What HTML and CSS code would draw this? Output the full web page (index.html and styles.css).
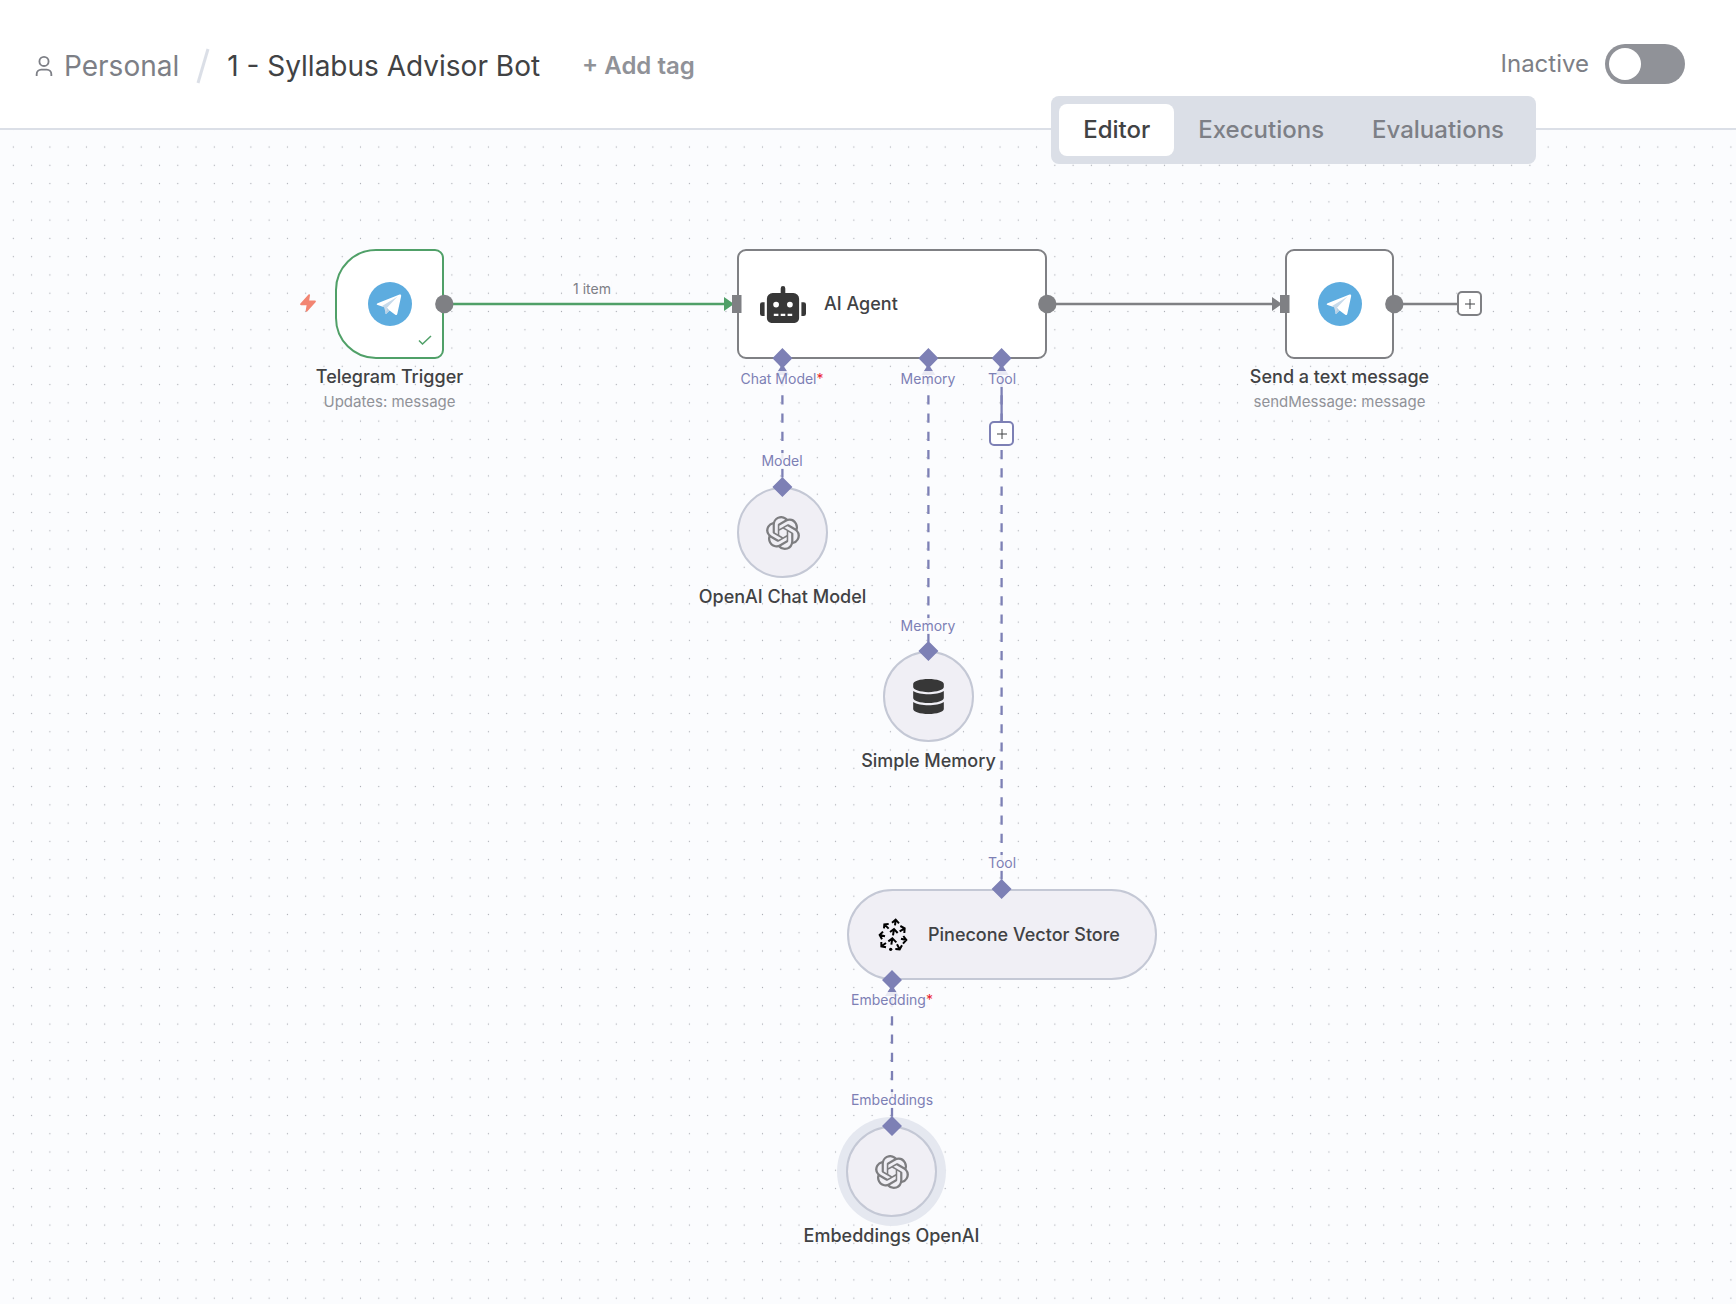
FILE: index.html
```html
<!DOCTYPE html>
<html lang="en">
<head>
<meta charset="utf-8">
<meta name="viewport" content="width=device-width, initial-scale=1">
<title>1 - Syllabus Advisor Bot</title>
<link rel="stylesheet" href="styles.css">
</head>
<body>
<svg class="sprite" aria-hidden="true">
  <symbol id="icon-user" viewBox="0 0 20 24"><circle cx="10" cy="7" r="5"/><path d="M2 23v-2a5 5 0 0 1 5-5h6a5 5 0 0 1 5 5v2"/></symbol>
  <symbol id="icon-bolt" viewBox="0 0 16 18"><path d="M8.500.5C9.200-.2 10.300.2 10 1.300L9.200 6.500h5.600c1 0 1.400 1 .7 1.700L7.200 17.400c-.7.700-1.700.3-1.500-.8l.9-5.400H1.100c-1 0-1.400-1-.7-1.700z"/></symbol>
  <symbol id="icon-telegram" viewBox="0 0 66 66">
    <circle cx="33" cy="33" r="33" fill="#5dacdf"/>
    <path fill="#fff" d="M14.400 31.800 47.300 18.900c1.500-.6 2.900.4 2.400 2.600l-5.700 26c-.4 1.900-1.600 2.300-3.100 1.500l-8.600-6.300-4.200 4c-.5.500-.9.900-1.800.9l.6-8.800L14.500 34.600c-1.900-.6-1.900-1.900-.1-2.800z"/>
    <path fill="#c8daea" d="M20.500 36.500 44 22 28.500 38.500 27 47.500 24 38z"/>
    <path fill="#b5cfe4" d="M26.300 47.600 28.500 38.500 32.300 42.700l-4.200 4c-.5.500-.9.900-1.800.9z"/>
  </symbol>
  <symbol id="icon-robot" viewBox="0 0 640 512"><path d="M32 224h32v192H32a31.962 31.962 0 0 1-32-32V256a31.962 31.962 0 0 1 32-32zm512-48v272a64.063 64.063 0 0 1-64 64H160a64.063 64.063 0 0 1-64-64V176a79.974 79.974 0 0 1 80-80h112V32a32 32 0 0 1 64 0v64h112a79.974 79.974 0 0 1 80 80zm-280 80a40 40 0 1 0-40 40 39.997 39.997 0 0 0 40-40zm-8 128h-64v32h64zm96 0h-64v32h64zm104-128a40 40 0 1 0-40 40 39.997 39.997 0 0 0 40-40zm-8 128h-64v32h64zm192-128v128a31.962 31.962 0 0 1-32 32h-32V224h32a31.962 31.962 0 0 1 32 32z"/></symbol>
  <symbol id="icon-database" viewBox="0 0 448 512"><path d="M448 73.143v45.714C448 159.143 347.667 192 224 192S0 159.143 0 118.857V73.143C0 32.857 100.333 0 224 0s224 32.857 224 73.143zM448 176v102.857C448 319.143 347.667 352 224 352S0 319.143 0 278.857V176c48.125 33.143 136.208 48.572 224 48.572S399.874 209.143 448 176zm0 160v102.857C448 479.143 347.667 512 224 512S0 479.143 0 438.857V336c48.125 33.143 136.208 48.572 224 48.572S399.874 369.143 448 336z"/></symbol>
  <symbol id="icon-openai" viewBox="0 0 24 24"><path d="M22.2819 9.8211a5.9847 5.9847 0 0 0-.5157-4.9108 6.0462 6.0462 0 0 0-6.5098-2.9A6.0651 6.0651 0 0 0 4.9807 4.1818a5.9847 5.9847 0 0 0-3.9977 2.9 6.0462 6.0462 0 0 0 .7427 7.0966 5.98 5.98 0 0 0 .511 4.9107 6.051 6.051 0 0 0 6.5146 2.9001A5.9847 5.9847 0 0 0 13.2599 24a6.0557 6.0557 0 0 0 5.7718-4.2058 5.9894 5.9894 0 0 0 3.9977-2.9001 6.0557 6.0557 0 0 0-.7475-7.0729zm-9.022 12.6081a4.4755 4.4755 0 0 1-2.8764-1.0408l.1419-.0804 4.7783-2.7582a.7948.7948 0 0 0 .3927-.6813v-6.7369l2.02 1.1686a.071.071 0 0 1 .038.052v5.5826a4.504 4.504 0 0 1-4.4945 4.4944zm-9.6607-4.1254a4.4708 4.4708 0 0 1-.5346-3.0137l.142.0852 4.783 2.7582a.7712.7712 0 0 0 .7806 0l5.8428-3.3685v2.3324a.0804.0804 0 0 1-.0332.0615L9.74 19.9502a4.4992 4.4992 0 0 1-6.1408-1.6464zM2.3408 7.8956a4.485 4.485 0 0 1 2.3655-1.9728V11.6a.7664.7664 0 0 0 .3879.6765l5.8144 3.3543-2.0201 1.1685a.0757.0757 0 0 1-.071 0l-4.8303-2.7865A4.504 4.504 0 0 1 2.3408 7.872zm16.5963 3.8558L13.1038 8.364 15.1192 7.2a.0757.0757 0 0 1 .071 0l4.8303 2.7913a4.4944 4.4944 0 0 1-.6765 8.1042v-5.6772a.79.79 0 0 0-.407-.667zm2.0107-3.0231l-.142-.0852-4.7735-2.7818a.7759.7759 0 0 0-.7854 0L9.409 9.2297V6.8974a.0662.0662 0 0 1 .0284-.0615l4.8303-2.7866a4.4992 4.4992 0 0 1 6.6802 4.66zM8.3065 12.863l-2.02-1.1638a.0804.0804 0 0 1-.038-.0567V6.0742a4.4992 4.4992 0 0 1 7.3757-3.4537l-.142.0805L8.704 5.459a.7948.7948 0 0 0-.3927.6813zm1.0976-2.3654l2.602-1.4998 2.6069 1.4998v2.9994l-2.5974 1.4997-2.6067-1.4997Z"/></symbol>
  <symbol id="icon-pinecone" viewBox="22 22 90 102">
    <circle cx="60" cy="116" r="5" fill="#000" stroke="none"/>
    <path d="M73 44 75 27M64 36 75 27 85 38M67 74 70 55M58 64 70 55 81 67M62 102 65 83M53 92 65 83 77 95M54 54 41 41M40 53 41 41 54 40M43 77 27 73M37 63 27 73 34 86M46 97 32 107M32 94 32 107 46 110M87 62 102 53M89 46 102 53 101 67M91 84 107 88M98 76 107 88 97 99M79 101 87 116M74 115 87 116 94 104"/>
  </symbol>
</svg>

<header class="topbar">
  <nav class="crumbs" aria-label="Breadcrumb">
    <a class="project" href="#"><svg class="user-icon"><use href="#icon-user"/></svg>Personal</a>
    <svg class="slash" viewBox="0 0 14 36"><path d="M2 35 12 1"/></svg>
    <h1 class="title">1 - Syllabus Advisor Bot</h1>
  </nav>
  <button class="add-tag" type="button">+ Add tag</button>
  <label class="activator">Inactive<input class="switch" type="checkbox" role="switch"></label>
  <div class="tabs" role="tablist">
    <button class="tab tab-active" type="button" role="tab" aria-selected="true">Editor</button>
    <button class="tab" type="button" role="tab">Executions</button>
    <button class="tab" type="button" role="tab">Evaluations</button>
  </div>
</header>

<main class="canvas">
  <svg class="layer" aria-hidden="true">
    <defs>
      <pattern id="grid" width="16" height="16" patternUnits="userSpaceOnUse" patternTransform="translate(4.200 7.900) scale(1.142)"><circle cx="8" cy="8" r=".55" fill="#a9acb3"/></pattern>
    </defs>
    <rect width="100%" height="100%" fill="url(#grid)"/>
    <g class="edge">
      <path class="edge-success" d="M444 174H726"/>
      <path d="M1047 174H1274M1394 174H1458"/>
      <path class="edge-sub" d="M1001.600 256V292"/>
      <path class="edge-sub dashed" d="M782.400 247V357M928.400 247V521M1001.600 247V759M892 868V996"/>
    </g>
    <path class="arrow-success" d="M724 167 734 174 724 181z"/>
    <path class="arrow" d="M1272 167 1282 174 1272 181z"/>
    <path class="arrow-sub" d="M782.400 234l7 11h-14zM928.400 234l7 11h-14zM1001.600 234l7 11h-14zM892 855l7 11h-14z"/>
  </svg>

  <section class="node trigger">
    <svg class="bolt"><use href="#icon-bolt"/></svg>
    <div class="box box-trigger"><svg class="telegram"><use href="#icon-telegram"/></svg><svg class="check" viewBox="0 0 14 10"><path d="M1 5.500 4.500 9 13 1"/></svg></div>
    <h2 class="name">Telegram Trigger</h2>
    <p class="sub">Updates: message</p>
  </section>

  <section class="node agent">
    <div class="box box-wide"><svg class="robot"><use href="#icon-robot"/></svg><h2 class="name">AI Agent</h2></div>
  </section>

  <section class="node send">
    <div class="box"><svg class="telegram"><use href="#icon-telegram"/></svg></div>
    <h2 class="name">Send a text message</h2>
    <p class="sub">sendMessage: message</p>
  </section>

  <section class="node chat-model">
    <div class="box box-round"><svg class="openai"><use href="#icon-openai"/></svg></div>
    <h2 class="name">OpenAI Chat Model</h2>
  </section>

  <section class="node memory">
    <div class="box box-round"><svg class="database"><use href="#icon-database"/></svg></div>
    <h2 class="name">Simple Memory</h2>
  </section>

  <section class="node pinecone">
    <div class="box box-pill"><svg class="cone"><use href="#icon-pinecone"/></svg><h2 class="name">Pinecone Vector Store</h2></div>
  </section>

  <section class="node embeddings">
    <div class="box box-round box-selected"><svg class="openai"><use href="#icon-openai"/></svg></div>
    <h2 class="name">Embeddings OpenAI</h2>
  </section>

  <svg class="layer" aria-hidden="true">
    <g class="port">
      <circle cx="444.300" cy="174" r="9.200"/><circle cx="1047.300" cy="174" r="9.200"/><circle cx="1394.300" cy="174" r="9.200"/>
      <path d="M732 165h9.500v18h-9.500zM1280 165h9.500v18h-9.500z"/>
    </g>
    <path class="port-sub" d="M782.400 218l10 10.300-10 10.300-10-10.300zM928.400 218l10 10.300-10 10.300-10-10.300zM1001.600 218l10 10.300-10 10.300-10-10.300zM782.400 347l10 10-10 10-10-10zM928.400 511l10 10-10 10-10-10zM1001.600 749l10 10-10 10-10-10zM892 840l10 10-10 10-10-10zM892 986l10 10-10 10-10-10z"/>
  </svg>

  <span class="label items">1 item</span>
  <span class="label port-label in-model">Chat Model<b class="req">*</b></span>
  <span class="label port-label in-memory">Memory</span>
  <span class="label port-label in-tool">Tool</span>
  <span class="label port-label out-model">Model</span>
  <span class="label port-label out-memory">Memory</span>
  <span class="label port-label out-tool">Tool</span>
  <span class="label port-label in-embedding">Embedding<b class="req">*</b></span>
  <span class="label port-label out-embedding">Embeddings</span>

  <button class="plus plus-main" type="button" aria-label="Add next node"><svg viewBox="0 0 12 12"><path d="M6 1v10M1 6h10"/></svg></button>
  <button class="plus plus-sub" type="button" aria-label="Add tool"><svg viewBox="0 0 12 12"><path d="M6 1v10M1 6h10"/></svg></button>
</main>
</body>
</html>
```
FILE: styles.css
```css
* { box-sizing: border-box; }

body {
  margin: 0;
  min-height: 100vh;
  display: flex;
  flex-direction: column;
  font-family: Inter, "Liberation Sans", sans-serif;
  color: #414244;
  background: #fbfcfe;
}

h1, h2, p { margin: 0; }
button { font: inherit; border: 0; padding: 0; background: none; color: inherit; }
svg { display: block; }
.sprite { position: absolute; width: 0; height: 0; }

/* Top bar */
.topbar {
  position: relative;
  z-index: 2;
  display: flex;
  align-items: center;
  height: 130px;
  padding: 0 51px 0 34px;
  background: #fff;
  border-bottom: 2px solid #dbdfe7;
}
.crumbs { display: flex; align-items: center; gap: 17px; padding-top: 4px; }
.project {
  display: flex;
  align-items: center;
  gap: 10px;
  font-size: 28px;
  line-height: 36px;
  color: #7d7f86;
  text-decoration: none;
}
.user-icon { width: 20px; height: 22px; fill: none; stroke: #7d7f86; stroke-width: 2; }
.slash { width: 14px; height: 36px; fill: none; stroke: #dbdfe7; stroke-width: 3; }
.title { font-size: 28px; line-height: 36px; font-weight: 400; }
.add-tag { margin-left: 42px; padding-top: 4px; font-size: 24px; line-height: 32px; font-weight: 600; color: #909298; }
.activator {
  display: flex;
  align-items: center;
  gap: 16px;
  margin-left: auto;
  font-size: 24px;
  line-height: 32px;
  color: #7d7f86;
}
.switch {
  appearance: none;
  width: 80px;
  height: 40px;
  margin: 0;
  padding: 4px;
  border-radius: 20px;
  background: #909298;
}
.switch::before { content: ""; display: block; width: 32px; height: 32px; border-radius: 50%; background: #fff; }
.switch:checked::before { margin-left: auto; }
.tabs {
  position: absolute;
  top: 96px;
  right: 200px;
  display: flex;
  padding: 8px;
  border-radius: 8px;
  background: #dbdfe7;
}
.tab { height: 52px; padding: 0 24px 2px; border-radius: 8px; font-size: 24px; font-weight: 500; color: #7d7f86; }
.tab-active { background: #fff; color: #414244; }

/* Canvas */
.canvas { position: relative; flex: 1; min-height: 1174px; overflow: hidden; }
.layer { position: absolute; inset: 0; width: 100%; height: 100%; pointer-events: none; }
.edge { fill: none; stroke: #7f8084; stroke-width: 2.3; }
.edge-success { stroke: #50a068; }
.edge-sub { stroke: #7d80b5; }
.dashed { stroke-dasharray: 9.200 9.070; }
.arrow { fill: #7f8084; }
.arrow-success { fill: #50a068; }
.arrow-sub, .port-sub { fill: #7d80b5; }
.port { fill: #7f8084; }

.node { position: absolute; display: flex; flex-direction: column; align-items: center; width: 109px; }
.trigger { left: 335px; top: 119px; }
.agent { left: 737px; top: 119px; width: 310px; }
.send { left: 1285px; top: 119px; }
.chat-model { left: 737px; top: 357px; width: 91px; }
.memory { left: 883px; top: 521px; width: 91px; }
.pinecone { left: 847px; top: 759px; width: 310px; }
.embeddings { left: 846px; top: 996px; width: 91px; }

.box {
  position: relative;
  display: flex;
  align-items: center;
  justify-content: center;
  width: 100%;
  height: 110px;
  border: 2px solid #7f8084;
  border-radius: 9px;
  background: #fff;
}
.box-trigger { border-color: #50a068; border-radius: 41px 9px 9px 41px; }
.box-wide { justify-content: flex-start; gap: 18px; padding: 0 21px; }
.box-round, .box-pill { height: 91px; border-color: #c4c8d5; border-radius: 46px; background: #f0eff5; }
.box-pill { justify-content: flex-start; gap: 20px; padding: 0 29px; }
.box-selected { box-shadow: 0 0 0 9px #e5e8f0; }

.name { font-size: 18px; line-height: 24px; font-weight: 500; white-space: nowrap; }
.box + .name { margin-top: 6px; }
.box-round + .name { margin-top: 7px; }
.sub { font-size: 15px; line-height: 20px; margin-top: 3px; color: #909298; white-space: nowrap; }

.telegram { width: 44px; height: 44px; }
.robot { width: 46px; height: 37px; fill: #373737; }
.database { width: 31px; height: 35px; fill: #373737; }
.openai { width: 34px; height: 34px; fill: #7d7d80; }
.cone { width: 30px; height: 34px; fill: none; stroke: #000; stroke-width: 6; }
.bolt { position: absolute; left: -35px; top: 45px; width: 16px; height: 18px; fill: #f28572; }
.check { position: absolute; right: 10px; bottom: 12px; width: 14px; height: 10px; fill: none; stroke: #50a068; stroke-width: 1.5; }

.label {
  position: absolute;
  transform: translateX(-50%);
  font-size: 14px;
  line-height: 16px;
  white-space: nowrap;
  background: rgba(251, 252, 254, .85);
}
.port-label { color: #7d80b5; }
.req { font-weight: 400; color: #ea1f30; }
.items { left: 592px; top: 151px; color: #7d7f86; }
.in-model { left: 782px; top: 241px; }
.in-memory { left: 928px; top: 241px; }
.in-tool { left: 1002px; top: 241px; }
.out-model { left: 782px; top: 323px; }
.out-memory { left: 928px; top: 488px; }
.out-tool { left: 1002px; top: 725px; }
.in-embedding { left: 892px; top: 862px; }
.out-embedding { left: 892px; top: 962px; }

.plus {
  position: absolute;
  display: grid;
  place-items: center;
  width: 25px;
  height: 25px;
  border: 2px solid #7f8084;
  border-radius: 5px;
  background: #fff;
}
.plus svg { width: 12px; height: 12px; stroke: #414244; }
.plus-main { left: 1457px; top: 161px; }
.plus-sub { left: 989px; top: 291px; border-color: #7d80b5; }
```
